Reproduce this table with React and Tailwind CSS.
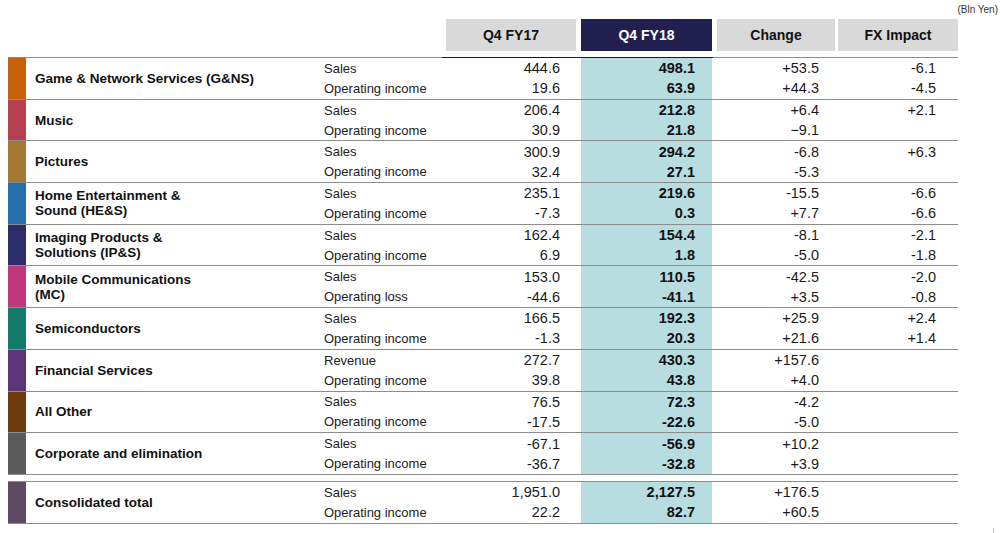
const groups = [
  { name: ["Game & Network Services (G&NS)"], color: "bg-[#c5600d]", rows: [["Sales", "444.6", "498.1", "+53.5", "-6.1"], ["Operating income", "19.6", "63.9", "+44.3", "-4.5"]] },
  { name: ["Music"], color: "bg-[#b63f52]", rows: [["Sales", "206.4", "212.8", "+6.4", "+2.1"], ["Operating income", "30.9", "21.8", "\u22129.1", ""]] },
  { name: ["Pictures"], color: "bg-[#a27a33]", rows: [["Sales", "300.9", "294.2", "-6.8", "+6.3"], ["Operating income", "32.4", "27.1", "-5.3", ""]] },
  { name: ["Home Entertainment &", "Sound (HE&S)"], color: "bg-[#2670ab]", rows: [["Sales", "235.1", "219.6", "-15.5", "-6.6"], ["Operating income", "-7.3", "0.3", "+7.7", "-6.6"]] },
  { name: ["Imaging Products &", "Solutions (IP&S)"], color: "bg-[#2a2d6a]", rows: [["Sales", "162.4", "154.4", "-8.1", "-2.1"], ["Operating income", "6.9", "1.8", "-5.0", "-1.8"]] },
  { name: ["Mobile Communications", "(MC)"], color: "bg-[#c0387c]", rows: [["Sales", "153.0", "110.5", "-42.5", "-2.0"], ["Operating loss", "-44.6", "-41.1", "+3.5", "-0.8"]] },
  { name: ["Semiconductors"], color: "bg-[#127a6b]", rows: [["Sales", "166.5", "192.3", "+25.9", "+2.4"], ["Operating income", "-1.3", "20.3", "+21.6", "+1.4"]] },
  { name: ["Financial Services"], color: "bg-[#5b3576]", rows: [["Revenue", "272.7", "430.3", "+157.6", ""], ["Operating income", "39.8", "43.8", "+4.0", ""]] },
  { name: ["All Other"], color: "bg-[#6c3a0b]", rows: [["Sales", "76.5", "72.3", "-4.2", ""], ["Operating income", "-17.5", "-22.6", "-5.0", ""]] },
  { name: ["Corporate and elimination"], color: "bg-[#5b5b5b]", rows: [["Sales", "-67.1", "-56.9", "+10.2", ""], ["Operating income", "-36.7", "-32.8", "+3.9", ""]] },
];

const total = { name: ["Consolidated total"], color: "bg-[#5f4a65]", rows: [["Sales", "1,951.0", "2,127.5", "+176.5", ""], ["Operating income", "22.2", "82.7", "+60.5", ""]] };

const Group = ({ g }) => (
  <div className="flex h-[41.7px] w-[950px] border-b border-[#8c8c8c]">
    <div className={`w-[18px] shrink-0 ${g.color}`} />
    <div className="w-[298px] shrink-0 pl-[9px] flex flex-col justify-center text-[13.5px] font-bold leading-[15px] text-[#111]">
      {g.name.map((n) => (
        <div key={n}>{n}</div>
      ))}
    </div>
    <div className="w-[122px] shrink-0 flex flex-col justify-center pt-[1px] text-[13px] text-[#222]">
      {g.rows.map((r) => (
        <div key={r[0]} className="h-[20px] leading-[20px]">{r[0]}</div>
      ))}
    </div>
    <div className="w-[130px] shrink-0 flex flex-col justify-center pr-[16px] text-right text-[14.5px] text-[#1a1a1a]">
      {g.rows.map((r) => (
        <div key={r[0]} className="h-[20px] leading-[20px]">{r[1]}</div>
      ))}
    </div>
    <div className="w-[5px] shrink-0" />
    <div className="w-[131px] shrink-0 flex flex-col justify-center pr-[17px] text-right text-[14.5px] font-bold bg-[#b8dde1] text-[#111]">
      {g.rows.map((r) => (
        <div key={r[0]} className="h-[20px] leading-[20px]">{r[2]}</div>
      ))}
    </div>
    <div className="w-[5px] shrink-0" />
    <div className="w-[118px] shrink-0 flex flex-col justify-center pr-[16px] text-right text-[14.5px] text-[#1a1a1a]">
      {g.rows.map((r) => (
        <div key={r[0]} className="h-[20px] leading-[20px]">{r[3]}</div>
      ))}
    </div>
    <div className="w-[3px] shrink-0" />
    <div className="w-[120px] shrink-0 flex flex-col justify-center pr-[22px] text-right text-[14.5px] text-[#1a1a1a]">
      {g.rows.map((r) => (
        <div key={r[0]} className="h-[20px] leading-[20px]">{r[4]}</div>
      ))}
    </div>
  </div>
);

export default function App() {
  return (
    <div className="relative w-[1000px] h-[533px] bg-white overflow-hidden font-['Liberation_Sans',Arial,sans-serif]">
      <div className="h-[19px] flex justify-end pr-[2px] pt-[4px] text-[10px] leading-[11px] text-[#333]">(Bln Yen)</div>

      <div className="flex h-[32px] ml-[446px] text-[14px] font-bold">
        <div className="w-[130px] flex items-center justify-center bg-[#d9d9d9] text-[#111]">Q4 FY17</div>
        <div className="w-[5px]" />
        <div className="w-[131px] flex items-center justify-center bg-[#201f4f] text-white">Q4 FY18</div>
        <div className="w-[5px]" />
        <div className="w-[118px] flex items-center justify-center bg-[#d9d9d9] text-[#111]">Change</div>
        <div className="w-[3px]" />
        <div className="w-[120px] flex items-center justify-center bg-[#d9d9d9] text-[#111]">FX Impact</div>
      </div>

      <div className="mt-[6px] ml-[8px] flex h-[1px] w-[950px]">
        <div className="w-[434px] bg-[#8c8c8c]" />
        <div className="w-[271px] bg-[#1a1a1a]" />
        <div className="flex-1 bg-[#8c8c8c]" />
      </div>

      <div className="ml-[8px]">
        {groups.map((g) => (
          <Group key={g.name[0]} g={g} />
        ))}
        <div className="h-[6px]" />
        <div className="w-[950px] h-[1px] bg-[#8c8c8c]" />
        <Group g={total} />
      </div>

      <div className="absolute left-[993px] top-[528px] w-[1px] h-[5px] bg-[#bbb]" />
    </div>
  );
}
